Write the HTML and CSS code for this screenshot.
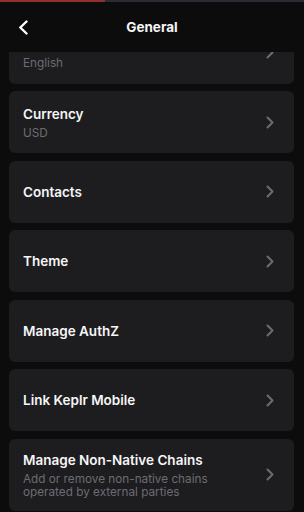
FILE: index.html
```html
<!DOCTYPE html>
<html>
<head>
<meta charset="utf-8">
<link rel="stylesheet" href="styles.css">
</head>
<body>
<div class="screen">
  <header class="header">
    <div class="progress"><div class="progress-fill"></div></div>
    <div class="bar">
      <div class="back">
        <svg width="11" height="15" viewBox="0 0 11 15"><path d="M8.5 1.5 L2.3 7.5 L8.5 13.5" fill="none" stroke="#ffffff" stroke-width="2.4" stroke-linecap="round" stroke-linejoin="round"/></svg>
      </div>
      <div class="title">General</div>
      <div class="spacer"></div>
    </div>
  </header>
  <div class="viewport">
    <div class="list">
      <div class="card">
        <div class="text"><div class="name">Language</div><div class="sub">English</div></div>
        <svg class="chev" width="8" height="13" viewBox="0 0 8 13"><path d="M1.5 1.5 L6.5 6.5 L1.5 11.5" fill="none" stroke="#6c6c72" stroke-width="2" stroke-linecap="round" stroke-linejoin="round"/></svg>
      </div>
      <div class="card">
        <div class="text"><div class="name">Currency</div><div class="sub">USD</div></div>
        <svg class="chev" width="8" height="13" viewBox="0 0 8 13"><path d="M1.5 1.5 L6.5 6.5 L1.5 11.5" fill="none" stroke="#6c6c72" stroke-width="2" stroke-linecap="round" stroke-linejoin="round"/></svg>
      </div>
      <div class="card">
        <div class="text"><div class="name">Contacts</div></div>
        <svg class="chev" width="8" height="13" viewBox="0 0 8 13"><path d="M1.5 1.5 L6.5 6.5 L1.5 11.5" fill="none" stroke="#6c6c72" stroke-width="2" stroke-linecap="round" stroke-linejoin="round"/></svg>
      </div>
      <div class="card">
        <div class="text"><div class="name">Theme</div></div>
        <svg class="chev" width="8" height="13" viewBox="0 0 8 13"><path d="M1.5 1.5 L6.5 6.5 L1.5 11.5" fill="none" stroke="#6c6c72" stroke-width="2" stroke-linecap="round" stroke-linejoin="round"/></svg>
      </div>
      <div class="card">
        <div class="text"><div class="name">Manage AuthZ</div></div>
        <svg class="chev" width="8" height="13" viewBox="0 0 8 13"><path d="M1.5 1.5 L6.5 6.5 L1.5 11.5" fill="none" stroke="#6c6c72" stroke-width="2" stroke-linecap="round" stroke-linejoin="round"/></svg>
      </div>
      <div class="card">
        <div class="text"><div class="name">Link Keplr Mobile</div></div>
        <svg class="chev" width="8" height="13" viewBox="0 0 8 13"><path d="M1.5 1.5 L6.5 6.5 L1.5 11.5" fill="none" stroke="#6c6c72" stroke-width="2" stroke-linecap="round" stroke-linejoin="round"/></svg>
      </div>
      <div class="card">
        <div class="text"><div class="name">Manage Non-Native Chains</div><div class="sub">Add or remove non-native chains<br>operated by external parties</div></div>
        <svg class="chev" width="8" height="13" viewBox="0 0 8 13"><path d="M1.5 1.5 L6.5 6.5 L1.5 11.5" fill="none" stroke="#6c6c72" stroke-width="2" stroke-linecap="round" stroke-linejoin="round"/></svg>
      </div>
    </div>
  </div>
</div>
</body>
</html>
```

FILE: styles.css
```css
html, body {
  margin: 0;
  padding: 0;
  background: #0c0c0d;
}
body {
  font-family: Inter, "Noto Sans", "Liberation Sans", sans-serif;
  color: #f6f6f6;
}
.screen {
  width: 304px;
  height: 512px;
  overflow: hidden;
  display: flex;
  flex-direction: column;
}
.header {
  flex: none;
  background: #0c0c0d;
  position: relative;
  z-index: 2;
}
.progress {
  height: 2px;
  background: #2a2c33;
}
.progress-fill {
  width: 105px;
  height: 2px;
  background: #93302b;
}
.bar {
  height: 50px;
  display: grid;
  grid-template-columns: 48px 1fr 48px;
  align-items: center;
}
.back {
  padding-left: 18px;
  display: flex;
  align-items: center;
}
.title {
  text-align: center;
  font-size: 13.5px;
  font-weight: 700;
}
.viewport {
  flex: 1;
  overflow: hidden;
}
.list {
  margin-top: -30.3px;
  padding: 0 10px 0 9px;
  display: flex;
  flex-direction: column;
  gap: 7.5px;
}
.card {
  box-sizing: border-box;
  min-height: 62px;
  background: #1d1d20;
  border-radius: 6px;
  padding: 12px 20px 12px 14px;
  display: flex;
  align-items: center;
}
.text {
  flex: 1;
}
.name {
  font-size: 13.5px;
  line-height: 18px;
  font-weight: 600;
  color: #f6f6f6;
}
.sub {
  margin-top: 4px;
  font-size: 11.75px;
  line-height: 13px;
  color: #6c6c72;
}
.chev {
  flex: none;
}
```
